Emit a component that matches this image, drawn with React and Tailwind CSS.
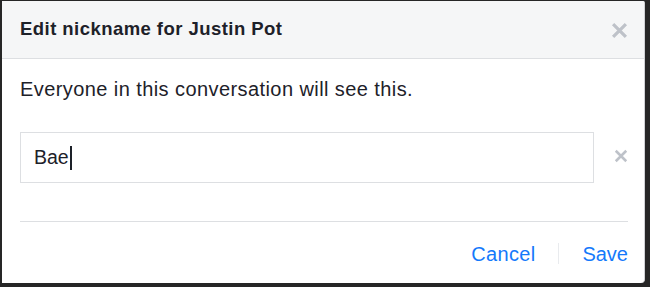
export default function App() {
  const X = ({ size, stroke }) => (
    <svg width={size} height={size} viewBox="0 0 12 12" fill="none">
      <path d="M1.5 1.5 L10.5 10.5 M10.5 1.5 L1.5 10.5" stroke="#bec2c9" strokeWidth={stroke} strokeLinecap="butt" />
    </svg>
  );
  return (
    <div
      className="w-[650px] h-[287px] bg-[#262626] pt-[1px] pl-[2px] pr-[5px] pb-[4px] flex"
      style={{ fontFamily: '"Liberation Sans", Arial, Helvetica, sans-serif' }}
    >
      <div className="flex-1 flex flex-col bg-white rounded-br-[4px] rounded-tr-[2px] overflow-hidden border-r border-[#d0d1d5]">
        <div className="h-[58px] shrink-0 bg-[#f5f6f7] border-b border-[#dddfe2] flex items-center justify-between pl-[18px] pr-[16px]">
          <div className="text-[18.5px] font-bold text-[#1d2129] tracking-[0.45px] leading-none pb-[1px]">
            Edit nickname for Justin Pot
          </div>
          <div className="w-[17px] flex items-center justify-center pt-[2px]">
            <X size={17} stroke={2.3} />
          </div>
        </div>
        <div className="pl-[18px] pr-[16px] flex flex-col">
          <div className="mt-[18px] h-[24px] flex items-center text-[20px] text-[#1d2129] tracking-[0.42px] leading-none">
            Everyone in this conversation will see this.
          </div>
          <div className="mt-[31px] flex items-center">
            <div className="w-[574px] h-[51px] border border-[#dddfe2] flex items-center pl-[13px] pt-[1px]">
              <span className="text-[19.5px] text-[#1d2129] leading-none">Bae</span>
              <span className="w-[2px] h-[24px] bg-[#1d2129] ml-[1px]"></span>
            </div>
            <div className="flex-1 flex items-center justify-end pr-[0px] pb-[3px]">
              <X size={14} stroke={2.2} />
            </div>
          </div>
          <div className="mt-[38px] h-px bg-[#dddfe2]"></div>
          <div className="mt-[21px] flex items-center justify-end">
            <span className="text-[20px] text-[#1479fb] leading-none tracking-[0.3px]">Cancel</span>
            <span className="w-px h-[21px] bg-[#e9ebee] mx-[23px]"></span>
            <span className="text-[20px] text-[#1479fb] leading-none">Save</span>
          </div>
        </div>
      </div>
    </div>
  );
}
